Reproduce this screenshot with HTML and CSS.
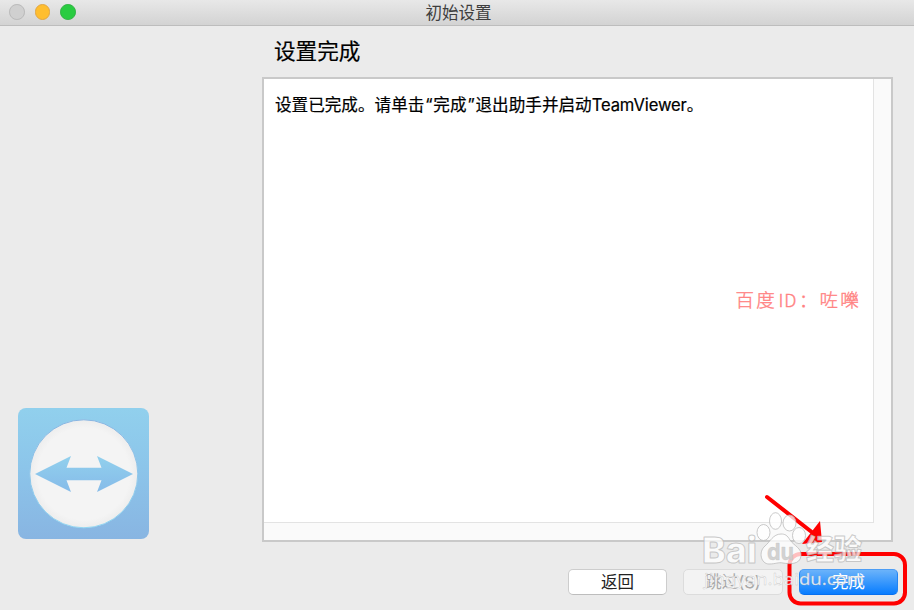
FILE: index.html
```html
<!DOCTYPE html>
<html lang="zh-CN">
<head>
<meta charset="utf-8">
<title>初始设置</title>
<link rel="stylesheet" href="styles.css">
</head>
<body>
<div class="window">
  <header class="titlebar">
    <div class="lights"><i class="light"></i><i class="light light-min"></i><i class="light light-max"></i></div>
    <div class="title">初始设置</div>
  </header>
  <div class="content">
    <aside class="side">
      <svg class="logo" viewBox="0 0 131 131" width="131" height="131">
        <defs>
          <linearGradient id="sky" x2="0" y2="1"><stop offset="0" stop-color="#91d0ed"/><stop offset=".45" stop-color="#8cc5ea"/><stop offset="1" stop-color="#88b5e2"/></linearGradient>
          <linearGradient id="rim" x2="0" y2="1"><stop offset="0" stop-color="#88b5e2"/><stop offset="1" stop-color="#91d6f2"/></linearGradient>
          <linearGradient id="arrow" x2="0" y2="1"><stop offset="0" stop-color="#91d0ed"/><stop offset="1" stop-color="#86bbe9"/></linearGradient>
          <radialGradient id="disc"><stop offset=".85" stop-color="#f4f4f4"/><stop offset="1" stop-color="#ededed"/></radialGradient>
        </defs>
        <rect width="131" height="131" rx="8" fill="url(#sky)"/>
        <circle cx="65.8" cy="65.8" r="54" fill="url(#disc)" stroke="url(#rim)"/>
        <path d="M17 66 53 48 48.500 59.700H83.500L79 48 115 66 79 84 83.500 72.300H48.500L53 84Z" fill="url(#arrow)"/>
      </svg>
    </aside>
    <main class="main">
      <h1 class="heading">设置完成</h1>
      <section class="panel">
        <div class="page">
          <p class="message">设置已完成。请单击<span class="quote">“</span>完成<span class="quote">”</span>退出助手并启动<span class="product">TeamViewer</span>。</p>
          <p class="credit">百度<span class="credit-id">ID</span>：咗嚛</p>
        </div>
      </section>
      <footer class="buttons">
        <button class="btn">返回</button>
        <button class="btn btn-off">跳过(S)</button>
        <button class="btn btn-main">完成</button>
      </footer>
    </main>
  </div>
  <svg class="overlay" viewBox="0 0 914 610" width="914" height="610">
    <rect x="789.500" y="554" width="115.500" height="49.500" rx="11" fill="none" stroke="#f00" stroke-width="4"/>
    <path d="M767 497 813 533" stroke="#f00" stroke-width="4" stroke-linecap="round"/>
    <path d="M820 521 822 542 802 544Z" fill="#f00"/>
    <g class="mark">
      <ellipse cx="763.500" cy="532.500" rx="6.500" ry="8"/>
      <ellipse cx="775.500" cy="521" rx="6" ry="8.300"/>
      <ellipse cx="789.500" cy="523" rx="6.500" ry="8"/>
      <ellipse cx="799" cy="535.500" rx="6.500" ry="8"/>
      <path d="M781 534C773 534 770 542 765 546C758 552 761 564 769 564C776 564 778 562 783 563C789 564 800 565 801 556C802 548 794 546 790 540C787 535 785 534 781 534Z"/>
      <text class="mark-name" x="702" y="563" textLength="55" lengthAdjust="spacingAndGlyphs">Bai</text>
      <text class="mark-du" x="767" y="560" textLength="27" lengthAdjust="spacingAndGlyphs">du</text>
      <text class="mark-cn" x="806" y="560" textLength="56" lengthAdjust="spacingAndGlyphs">经验</text>
      <text class="mark-url" x="704" y="585" textLength="160" lengthAdjust="spacingAndGlyphs">jingyan.baidu.com</text>
    </g>
  </svg>
</div>
</body>
</html>
```

FILE: styles.css
```css
* { box-sizing: border-box; }
body { margin: 0; font-family: Inter, "Noto Sans CJK SC", sans-serif; color: #000; }
.window { position: relative; width: 914px; height: 610px; background: #ebebeb; display: flex; flex-direction: column; overflow: hidden; }
.titlebar { height: 26px; flex: none; display: grid; grid-template-columns: 1fr auto 1fr; align-items: center; background: linear-gradient(#e8e8e8, #d3d3d3); border-bottom: 1px solid #bdbdbd; }
.lights { display: flex; gap: 10px; padding: 0 0 1px 9px; }
.light { width: 15.700px; height: 15.700px; border-radius: 50%; background: #d0d0d0; border: 1px solid #b9b9b9; }
.light-min { background: #ffbe2f; border-color: #e2a640; }
.light-max { background: #29cc41; border-color: #30b343; }
.title { font-size: 16.500px; line-height: 24px; color: #3e3e3e; grid-column: 2; padding-left: 3px; }
.content { flex: 1; display: grid; grid-template-columns: 262px 631px; }
.side { padding: 382px 0 0 18px; }
.logo { display: block; }
.main { display: flex; flex-direction: column; }
.heading { margin: 0; height: 51px; padding: 9px 0 0 12px; font-size: 21.600px; line-height: 32px; font-weight: 400; -webkit-text-stroke: .2px #000; }
.panel { height: 465px; flex: none; border: 2px solid #c9c9c9; background: #fafafa; padding: 0 17px 17px 0; }
.page { height: 100%; background: #fff; border: solid #e3e3e3; border-width: 0 1px 1px 0; padding: 14px 13px 0 11px; display: flex; flex-direction: column; }
.message { margin: 0; font-size: 16.600px; line-height: 24px; white-space: nowrap; -webkit-text-stroke: .2px #000; }
.quote { display: inline-block; width: 9px; text-align: center; }
.product { letter-spacing: -.13px; }
.credit { margin: 170px 0 0; align-self: flex-end; font: 300 18.500px/24px "Noto Sans CJK SC", sans-serif; letter-spacing: 2.200px; margin-right: -1px; color: #ff8080; white-space: nowrap; -webkit-text-stroke: .4px #ff8585; }
.credit-id { display: inline-block; width: 22px; text-align: center; letter-spacing: 1px; font-size: 18px; }
.buttons { display: flex; gap: 16px; padding: 27px 0 0 306px; }
.btn { flex: none; width: 99px; height: 26px; padding: 0; border: 1px solid #cdcdcd; border-bottom-color: #bdbdbd; border-radius: 5px; background: #fff; font: 16.500px/22px Inter, "Noto Sans CJK SC", sans-serif; color: #222; }
.btn-off { width: 100px; background: #f3f3f3; border-color: #dcdcdc; color: #a8a8a8; }
.btn-main { background: linear-gradient(#6bb3fa, #087dff); border-color: #4c9df5 #2384f2 #0870ee; color: #fff; }
.overlay { position: absolute; inset: 0; pointer-events: none; }
.mark { fill: rgba(255,255,255,.75); stroke: rgba(180,180,180,.7); stroke-width: 1; stroke-linejoin: round; }
.mark-name { font: 800 36px Inter, sans-serif; }
.mark-du { font: 700 23px Inter, sans-serif; fill: rgba(205,205,205,.9); stroke: rgba(190,190,190,.6); stroke-width: .5; }
.mark-cn { font: 900 28px "Noto Sans CJK SC", sans-serif; }
.mark-url { font: 17px "Noto Sans", sans-serif; fill: rgba(255,255,255,.85); stroke-width: .4; }
```
